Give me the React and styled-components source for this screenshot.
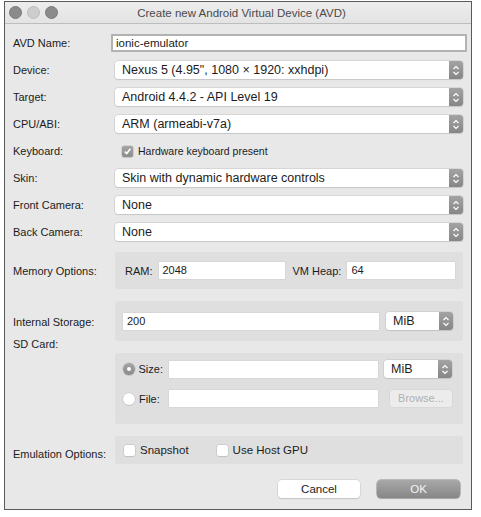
import React from 'react';
import styled, { createGlobalStyle } from 'styled-components';

const GlobalStyle = createGlobalStyle`
  html, body {
    margin: 0;
    padding: 0;
    background: #ffffff;
  }
  body {
    font-family: 'Liberation Sans', Arial, sans-serif;
    font-size: 11px;
    color: #1c1c1c;
  }
`;

const Page = styled.div`
  padding: 1px 9px 8px 4px;
`;

const Window = styled.div`
  width: 466px;
  height: 507px;
  border: 1px solid #5a5a5a;
  background: #e8e8e8;
  display: flex;
  flex-direction: column;
`;

const TitleBar = styled.div`
  height: 21px;
  border-bottom: 1px solid #bdbdbd;
  background: linear-gradient(#ededed, #e3e3e3);
  display: flex;
  align-items: center;
`;

const Lights = styled.div`
  display: flex;
  gap: 5px;
  padding-left: 4px;
`;

const Light = styled.span`
  width: 11px;
  height: 11px;
  border-radius: 50%;
  background: ${(p) => (p.$dim ? '#cdcdcd' : '#8b8b8b')};
  border: 0.5px solid ${(p) => (p.$dim ? '#bdbdbd' : '#7a7a7a')};
`;

const Title = styled.div`
  flex: 1;
  text-align: center;
  font-size: 11.5px;
  color: #4a4a4a;
  margin-left: -46px;
`;

const Body = styled.div`
  padding: 10px 8px 0 8px;
  display: flex;
  flex-direction: column;
`;

const Fields = styled.div`
  display: flex;
  flex-direction: column;
  gap: 9px;
`;

const Groups = styled.div`
  display: flex;
  flex-direction: column;
  gap: 12px;
  margin-top: 11px;
`;

const Row = styled.div`
  display: grid;
  grid-template-columns: 102px 348px;
  align-items: center;
  min-height: 18px;
`;

const Label = styled.div`
  color: #1c1c1c;
  white-space: nowrap;
  align-self: ${(p) => (p.$top ? 'start' : 'center')};
  margin-top: ${(p) => p.$shift || 0}px;
`;

const TextField = styled.div`
  height: 14px;
  margin: 0 -4px;
  padding: 0 3px;
  line-height: 14px;
  font-size: 11.5px;
  background: #fff;
  border: 2px solid #b2b2b2;
  border-radius: 1px;
`;

const SelectBox = styled.div`
  height: 18px;
  display: flex;
  align-items: stretch;
  background: #fff;
  border-radius: 3px;
  box-shadow: 0 0 0 0.5px #c4c4c4, 0 1px 1px rgba(0, 0, 0, 0.12);
  width: ${(p) => (p.$width ? `${p.$width}px` : 'auto')};
  flex: none;
`;

const SelectValue = styled.div`
  flex: 1;
  padding-left: 7px;
  line-height: 18px;
  font-size: 12.5px;
  white-space: nowrap;
  overflow: hidden;
`;

const SelectArrow = styled.div`
  width: 14px;
  border-radius: 0 3px 3px 0;
  background: linear-gradient(#a3a3a3, #868686);
  display: flex;
  align-items: center;
  justify-content: center;
`;

const CheckRow = styled.label`
  display: flex;
  align-items: center;
  gap: 5px;
  padding-left: ${(p) => p.$indent ?? 7}px;
  font-size: ${(p) => (p.$large ? 11.5 : 10.5)}px;
`;

const Check = styled.span`
  width: 11px;
  height: 11px;
  border-radius: 2px;
  background: ${(p) => (p.$on ? 'linear-gradient(#a5a5a5, #8c8c8c)' : '#fff')};
  box-shadow: 0 0 0 0.5px #bdbdbd, 0 1px 1px rgba(0, 0, 0, 0.1);
  display: flex;
  align-items: center;
  justify-content: center;
`;

const Group = styled.div`
  background: #dfdfdf;
  border-radius: 3px;
  height: ${(p) => p.$h}px;
  padding: ${(p) => p.$pad};
  box-sizing: border-box;
`;

const MemoryLine = styled.div`
  height: 100%;
  display: flex;
  align-items: center;
`;

const Field = styled.div`
  height: 17px;
  line-height: 17px;
  padding-left: 4px;
  background: #fff;
  box-shadow: 0 0 0 0.5px #cfcfcf;
  width: ${(p) => (p.$width ? `${p.$width}px` : 'auto')};
  flex: ${(p) => (p.$width ? 'none' : 1)};
  box-sizing: border-box;
`;

const InlineLabel = styled.span`
  margin: 0 ${(p) => p.$right || 6}px 0 ${(p) => p.$left || 0}px;
  white-space: nowrap;
`;

const StorageLine = styled.div`
  height: 100%;
  display: flex;
  align-items: center;
  gap: 7px;
`;

const SdGrid = styled.div`
  display: grid;
  grid-template-columns: 40px 1fr 68px;
  column-gap: 6px;
  row-gap: 12px;
  align-items: center;
`;

const RadioRow = styled.label`
  display: flex;
  align-items: center;
  gap: 4px;
`;

const Radio = styled.span`
  width: 12px;
  height: 12px;
  border-radius: 50%;
  background: ${(p) => (p.$on ? 'linear-gradient(#a5a5a5, #8a8a8a)' : '#fff')};
  box-shadow: 0 0 0 0.5px #bdbdbd, 0 1px 1px rgba(0, 0, 0, 0.1);
  display: flex;
  align-items: center;
  justify-content: center;
  &::after {
    content: '';
    width: 4px;
    height: 4px;
    border-radius: 50%;
    background: ${(p) => (p.$on ? '#fff' : 'transparent')};
  }
`;

const BrowseButton = styled.div`
  justify-self: center;
  width: 62px;
  height: 17px;
  line-height: 17px;
  margin-left: 6px;
  text-align: center;
  color: #b0b0b0;
  background: #ececec;
  border-radius: 3px;
  box-shadow: 0 0 0 0.5px #d2d2d2;
`;

const EmulationLine = styled.div`
  height: 100%;
  display: flex;
  align-items: center;
`;

const Buttons = styled.div`
  display: flex;
  justify-content: flex-end;
  gap: 17px;
  margin-top: 16px;
  padding-right: 3px;
`;

const Button = styled.div`
  width: ${(p) => p.$w}px;
  height: 18px;
  line-height: 18px;
  text-align: center;
  font-size: 11.5px;
  border-radius: 4px;
  background: ${(p) => (p.$primary ? 'linear-gradient(#a8a8a8, #878787)' : '#fff')};
  color: ${(p) => (p.$primary ? '#f4f4f4' : '#1c1c1c')};
  box-shadow: 0 0 0 0.5px ${(p) => (p.$primary ? '#8a8a8a' : '#c8c8c8')}, 0 1px 1px rgba(0, 0, 0, 0.15);
`;

const Arrows = () => (
  <svg width="8" height="11" viewBox="0 0 8 11">
    <path d="M1.5 4 L4 1.5 L6.5 4 M1.5 7 L4 9.5 L6.5 7" fill="none" stroke="#fff" strokeWidth="1.2" />
  </svg>
);

const Tick = () => (
  <svg width="9" height="9" viewBox="0 0 9 9">
    <path d="M1.8 4.6 L3.7 6.6 L7.4 1.8" fill="none" stroke="#fff" strokeWidth="1.6" />
  </svg>
);

const Select = ({ value, width }) => (
  <SelectBox $width={width}>
    <SelectValue>{value}</SelectValue>
    <SelectArrow>
      <Arrows />
    </SelectArrow>
  </SelectBox>
);

const selects = [
  ['Device:', 'Nexus 5 (4.95", 1080 × 1920: xxhdpi)'],
  ['Target:', 'Android 4.4.2 - API Level 19'],
  ['CPU/ABI:', 'ARM (armeabi-v7a)'],
];

const cameras = [
  ['Front Camera:', 'None'],
  ['Back Camera:', 'None'],
];

export default function App() {
  return (
    <Page>
      <GlobalStyle />
      <Window>
        <TitleBar>
          <Lights>
            <Light />
            <Light $dim />
            <Light />
          </Lights>
          <Title>Create new Android Virtual Device (AVD)</Title>
        </TitleBar>
        <Body>
          <Fields>
            <Row>
              <Label>AVD Name:</Label>
              <TextField>ionic-emulator</TextField>
            </Row>
            {selects.map(([label, value]) => (
              <Row key={label}>
                <Label>{label}</Label>
                <Select value={value} />
              </Row>
            ))}
            <Row>
              <Label>Keyboard:</Label>
              <CheckRow>
                <Check $on>
                  <Tick />
                </Check>
                Hardware keyboard present
              </CheckRow>
            </Row>
            <Row>
              <Label>Skin:</Label>
              <Select value="Skin with dynamic hardware controls" />
            </Row>
            {cameras.map(([label, value]) => (
              <Row key={label}>
                <Label>{label}</Label>
                <Select value={value} />
              </Row>
            ))}
          </Fields>

          <Groups>
            <Row>
              <Label>Memory Options:</Label>
              <Group $h={37} $pad="0 8px 0 10px">
                <MemoryLine>
                  <InlineLabel>RAM:</InlineLabel>
                  <Field $width={126}>2048</Field>
                  <InlineLabel $left={8}>VM Heap:</InlineLabel>
                  <Field>64</Field>
                </MemoryLine>
              </Group>
            </Row>
            <Row>
              <Label $shift={2}>Internal Storage:</Label>
              <Group $h={40} $pad="0 10px 0 8px">
                <StorageLine>
                  <Field>200</Field>
                  <Select value="MiB" width={67} />
                </StorageLine>
              </Group>
            </Row>
            <Row>
              <Label $top $shift={-15}>SD Card:</Label>
              <Group $h={71} $pad="7px 11px 0 8px">
                <SdGrid>
                  <RadioRow>
                    <Radio $on />
                    Size:
                  </RadioRow>
                  <Field />
                  <Select value="MiB" width={68} />
                  <RadioRow>
                    <Radio />
                    File:
                  </RadioRow>
                  <Field />
                  <BrowseButton>Browse...</BrowseButton>
                </SdGrid>
              </Group>
            </Row>
            <Row>
              <Label $shift={8}>Emulation Options:</Label>
              <Group $h={28} $pad="0">
                <EmulationLine>
                  <CheckRow $indent={9} $large>
                    <Check />
                    Snapshot
                  </CheckRow>
                  <CheckRow $indent={28} $large>
                    <Check />
                    Use Host GPU
                  </CheckRow>
                </EmulationLine>
              </Group>
            </Row>
          </Groups>

          <Buttons>
            <Button $w={82}>Cancel</Button>
            <Button $w={83} $primary>
              OK
            </Button>
          </Buttons>
        </Body>
      </Window>
    </Page>
  );
}
